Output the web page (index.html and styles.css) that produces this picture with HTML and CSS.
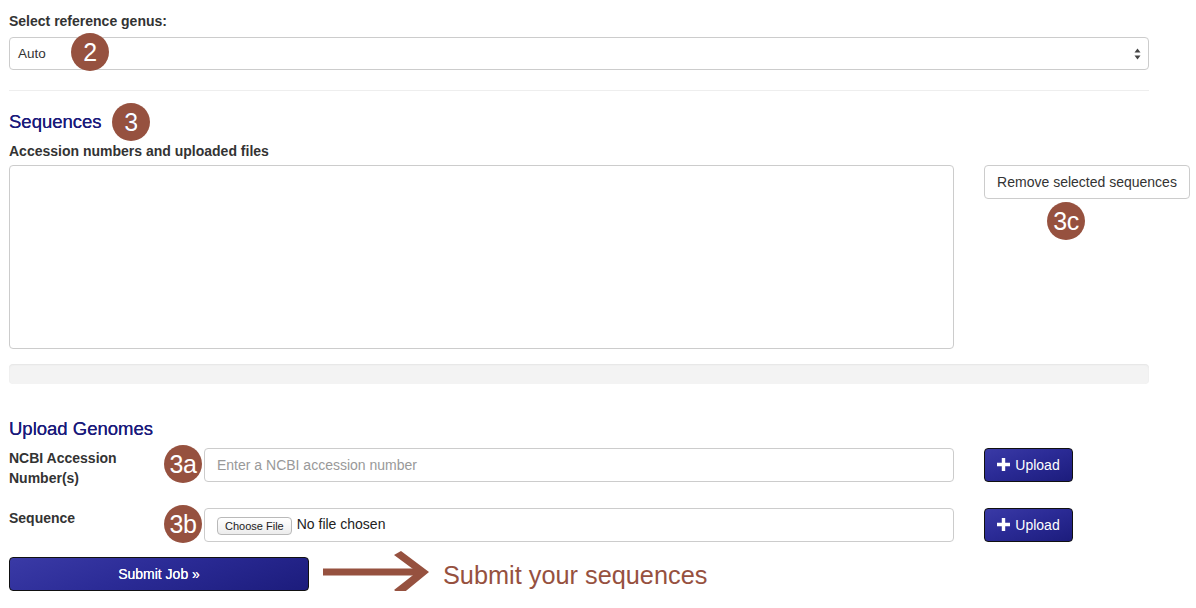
FILE: index.html
```html
<!DOCTYPE html>
<html>
<head>
<meta charset="utf-8">
<link rel="stylesheet" href="styles.css">
</head>
<body>
<div class="page">
  <div class="field-label">Select reference genus:</div>
  <div class="select-wrap">
    <div class="select">
      <span>Auto</span>
      <svg class="updown" width="7" height="12" viewBox="0 0 7 12"><path d="M0.5 4.5 L3.5 0.5 L6.5 4.5 Z M0.5 7.5 L3.5 11.5 L6.5 7.5 Z" fill="#444"/></svg>
    </div>
    <span class="badge b2">2</span>
  </div>
  <hr class="sep">
  <h2 class="heading">Sequences<span class="badge b3">3</span></h2>
  <div class="field-label sm">Accession numbers and uploaded files</div>
  <div class="seq-row">
    <div class="seq-box"></div>
    <div class="seq-side">
      <button class="btn-default">Remove selected sequences</button>
      <span class="badge b3c">3c</span>
    </div>
  </div>
  <div class="progress"></div>
  <h2 class="heading upload-h">Upload Genomes</h2>
  <div class="form-row">
    <div class="row-label">NCBI Accession<br>Number(s)</div>
    <div class="row-input">
      <span class="badge b3a">3a</span>
      <div class="input"><span class="placeholder">Enter a NCBI accession number</span></div>
    </div>
    <button class="btn-primary upload"><svg width="13" height="13" viewBox="0 0 13 13"><path d="M4.8 0 H8.2 V4.8 H13 V8.2 H8.2 V13 H4.8 V8.2 H0 V4.8 H4.8 Z" fill="#fff"/></svg>Upload</button>
  </div>
  <div class="form-row">
    <div class="row-label">Sequence</div>
    <div class="row-input">
      <span class="badge b3b">3b</span>
      <div class="input file"><span class="choose">Choose File</span><span class="nofile">No file chosen</span></div>
    </div>
    <button class="btn-primary upload"><svg width="13" height="13" viewBox="0 0 13 13"><path d="M4.8 0 H8.2 V4.8 H13 V8.2 H8.2 V13 H4.8 V8.2 H0 V4.8 H4.8 Z" fill="#fff"/></svg>Upload</button>
  </div>
  <div class="submit-row">
    <button class="btn-primary submit">Submit Job »</button>
    <svg class="arrow" width="110" height="48" viewBox="0 0 110 48"><path d="M0 17.5 H94 V24.5 H0 Z" fill="#96513f"/><path d="M71 4 L78 0 L106 21 L78 44 L71 39 L94 21 Z" fill="#96513f"/></svg>
    <span class="note">Submit your sequences</span>
  </div>
</div>
</body>
</html>
```
FILE: styles.css
```css
* { box-sizing: border-box; }
body {
  margin: 0;
  font-family: "Liberation Sans", Arial, Helvetica, sans-serif;
  font-size: 13px;
  color: #333;
  background: #fff;
}
.page {
  padding: 12px 9px 0 9px;
  width: 1196px;
}
.field-label {
  font-weight: bold;
  font-size: 14px;
  line-height: 18px;
  margin-bottom: 7px;
  color: #333;
}
.select-wrap { position: relative; width: 1140px; }
.select {
  height: 33px;
  border: 1px solid #ccc;
  border-radius: 4px;
  display: flex;
  align-items: center;
  justify-content: space-between;
  padding: 0 7px 0 8px;
  font-size: 13.5px;
  color: #333;
  background: #fff;
}
.updown { margin-top: 1px; }
.badge {
  position: absolute;
  width: 38px;
  height: 38px;
  border-radius: 50%;
  background: #96513f;
  color: #fff;
  font-family: "Liberation Sans", Arial, sans-serif;
  font-size: 25px;
  font-weight: normal;
  line-height: 38px;
  text-align: center;
  letter-spacing: -0.5px;
}
.b2 { left: 62px; top: -4px; }
.sep {
  border: 0;
  border-top: 1px solid #eee;
  margin: 20px 0 0 0;
  width: 1140px;
  height: 0;
}
.heading {
  position: relative;
  margin: 20px 0 0 0;
  font-size: 18.5px;
  font-weight: normal;
  line-height: 22px;
  color: #1a1a7a;
  text-shadow: 0 0 0.3px #1a1a7a;
}
.b3 { left: 103px; top: -8px; }
.heading + .field-label { margin-top: 9px; margin-bottom: 5px; }
.seq-row {
  display: flex;
  gap: 30px;
  align-items: flex-start;
}
.seq-box {
  flex-shrink: 0;
  width: 945px;
  height: 184px;
  border: 1px solid #ccc;
  border-radius: 4px;
}
.seq-side { position: relative; flex-shrink: 0; }
.btn-default {
  font-family: inherit;
  font-size: 14px;
  color: #333;
  background: #fff;
  border: 1px solid #ccc;
  border-radius: 4px;
  height: 34px;
  padding: 0 12px;
  width: 206px;
  white-space: nowrap;
}
.b3c { left: 63px; top: 37px; }
.progress {
  margin-top: 15px;
  width: 1140px;
  height: 20px;
  background: #f3f3f3;
  border-radius: 4px;
  box-shadow: inset 0 1px 2px rgba(0,0,0,0.06);
}
.upload-h { margin-top: 34px; }
.form-row {
  display: flex;
  align-items: flex-start;
  height: 33px;
  margin-top: 8px;
}
.form-row + .form-row { margin-top: 27px; }
.row-label {
  width: 195px;
  flex-shrink: 0;
  font-weight: bold;
  font-size: 14px;
  line-height: 20px;
}
.row-input { position: relative; width: 750px; flex-shrink: 0; }
.b3a, .b3b { left: -40px; top: -3px; }
.input {
  height: 34px;
  border: 1px solid #ccc;
  border-radius: 4px;
  display: flex;
  align-items: center;
  padding: 0 12px;
  font-size: 14px;
  color: #555;
}
.placeholder { color: #999; }
.input.file { padding: 0 0 0 12px; align-items: flex-start; padding-top: 7px; }
.choose {
  display: inline-block;
  font-size: 11px;
  line-height: 16px;
  padding: 0 7px;
  border: 1px solid #b9b9b9;
  border-radius: 4px;
  background: linear-gradient(#fff, #ececec);
  color: #222;
  margin-top: 1px;
  height: 18px;
}
.nofile { margin-left: 5px; color: #222; font-size: 14px; line-height: 17px; }
.btn-primary {
  font-family: inherit;
  color: #fff;
  border: 1px solid #111;
  border-radius: 4px;
  background: linear-gradient(160deg, #3a3aa6 0%, #2b2b96 45%, #1c1c7c 100%);
  cursor: pointer;
}
.upload {
  margin-left: 30px;
  flex-shrink: 0;
  width: 89px;
  height: 34px;
  font-size: 14px;
  display: flex;
  align-items: center;
  justify-content: center;
  gap: 5px;
  padding: 0;
}
.upload svg { margin-top: -1px; }
.submit-row {
  display: flex;
  align-items: center;
  height: 34px;
  margin-top: 16px;
}
.submit {
  flex-shrink: 0;
  width: 300px;
  height: 34px;
  font-size: 14px;
  text-shadow: 0 0 0.4px #fff;
}
.arrow { flex-shrink: 0; margin-left: 14px; margin-top: 2px; }
.note {
  margin-left: 10px;
  font-size: 25.3px;
  color: #96513f;
  margin-top: 2px;
  white-space: nowrap;
}
```
